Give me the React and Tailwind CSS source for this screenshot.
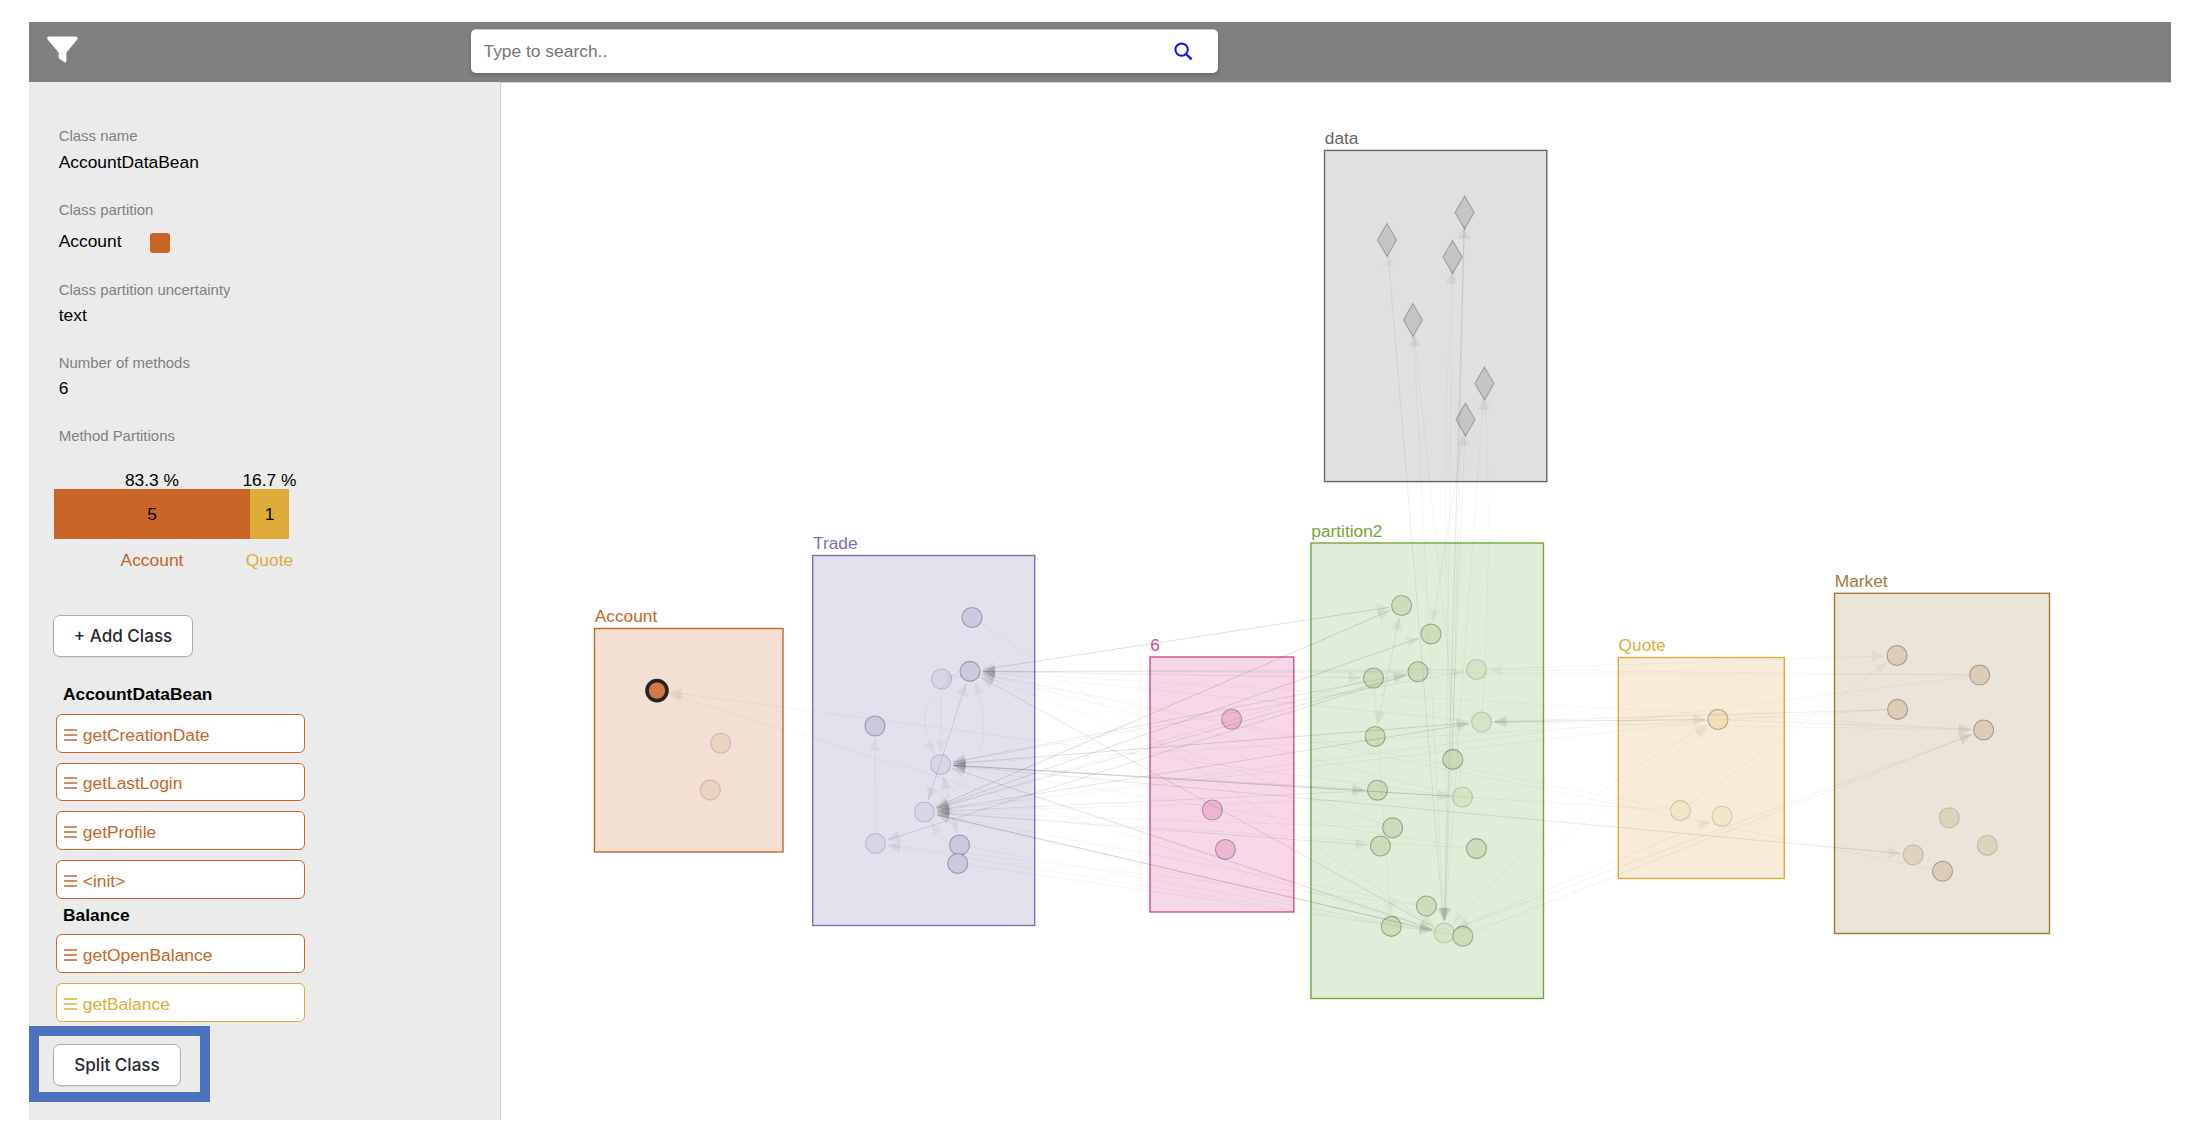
import React from "react";

const ORANGE = "#c86527";
const GOLD = "#dfac3a";

/* ---------- graph data ---------- */

const BOXES = [
  { name: "Account", x: 594.5, y: 628.5, w: 188.5, h: 223.5, c: "#c86527", f: "#f3dfd4" },
  { name: "Trade", x: 812.7, y: 555.5, w: 222, h: 370, c: "#7773b5", f: "#e2e2ee" },
  { name: "6", x: 1150, y: 657, w: 143.7, h: 255, c: "#d64a92", f: "#f6d8e7" },
  { name: "partition2", x: 1311, y: 543, w: 232.5, h: 455.5, c: "#74a63a", f: "#e1edd8" },
  { name: "data", x: 1324.5, y: 150.4, w: 222.3, h: 331.2, c: "#666666", f: "#e0e0e0" },
  { name: "Quote", x: 1618.3, y: 657.5, w: 166, h: 221, c: "#dfac3a", f: "#f7ecd8" },
  { name: "Market", x: 1834.5, y: 593.3, w: 215, h: 340.2, c: "#a27a33", f: "#ebe4d8" },
];

const FILLS = {
  A: ["#eccfba", "#ecd2bf"],
  T: ["#cac8df", "#d6d4e7"],
  S: ["#edb3d0", "#edb3d0"],
  P: ["#ccdcb6", "#d5e2c4"],
  Q: ["#f2dfb8", "#f4e6c5"],
  M: ["#dccbb3", "#dfd2b9"],
};

/* id: [x, y, faint] */
const NODES = {
  A1: [657, 690.5, 0], A2: [720.7, 743.3, 1], A3: [710.3, 790, 1],
  T1: [972, 617.5, 0], T2: [970, 671.4, 0], T3: [941.5, 679, 1], T4: [875, 726, 0],
  T5: [940.6, 764.5, 1], T6: [924.4, 812, 1], T7: [875.5, 843.5, 1], T8: [959.5, 845, 0], T9: [957.8, 863.5, 0],
  S1: [1231.6, 719.3, 0], S2: [1212.3, 810, 0], S3: [1225.4, 849.5, 0],
  P1: [1401.6, 605.5, 0], P2: [1431, 634, 0], P3: [1373.5, 678, 0], P4: [1418, 671.7, 0],
  P5: [1476.5, 669.5, 1], P6: [1481.5, 722, 1], P7: [1375.2, 736.5, 0], P8: [1452.8, 759.4, 0],
  P9: [1377.5, 790.3, 0], P10: [1462.5, 797, 1], P11: [1392.6, 827.7, 0], P12: [1380.4, 846, 0],
  P13: [1476.5, 848.6, 0], P14: [1426.4, 906, 0], P15: [1391.3, 926.4, 0], P16: [1444.3, 933, 1],
  P17: [1462.8, 936.3, 0],
  Q1: [1718, 719.5, 0], Q2: [1680.4, 810.6, 1], Q3: [1722, 816.2, 1],
  M1: [1897, 655.5, 0], M2: [1979.7, 675, 0], M3: [1897.6, 709.4, 0], M4: [1983.6, 730, 0],
  M5: [1949.3, 817.8, 1], M6: [1987.3, 845.4, 1], M7: [1913.2, 854.7, 1], M8: [1942.5, 871.2, 0],
};

const DIAMONDS = {
  D1: [1387, 240], D2: [1464.6, 212.5], D3: [1452.6, 257],
  D4: [1412.9, 320], D5: [1484.5, 383.5], D6: [1465.5, 419.5],
};

/* [from, to, opacity, arrow at the start too, bend] */
const EDGES = [
  ["P10", "A1", 0.04], ["P16", "A1", 0.04],
  ["P1", "T2", 0.12, 1], ["P4", "T2", 0.06], ["P3", "T2", 0.07, 1], ["P5", "T2", 0.05],
  ["P6", "T2", 0.04], ["P10", "T2", 0.04], ["Q2", "T2", 0.03], ["M8", "T2", 0.035],
  ["P16", "T2", 0.1], ["M4", "T2", 0.03], ["M2", "T2", 0.035], ["P11", "T2", 0.035],
  ["T1", "P16", 0.045], ["T3", "T5", 0.04], ["T3", "T2", 0.03], ["T7", "T4", 0.045],
  ["T2", "T6", 0.11, 1], ["T2", "T5", 0.04, 0, 52], ["T6", "T2", 0.035, 0, 62],
  ["T8", "T5", 0.06, 1], ["T9", "T6", 0.04],
  ["P4", "T5", 0.09, 1], ["P6", "T5", 0.12, 1], ["P5", "T5", 0.06, 1], ["P10", "T5", 0.14, 1], ["P9", "T5", 0.08, 1],
  ["M7", "T5", 0.09, 1], ["P16", "T5", 0.12, 1], ["Q2", "T5", 0.04], ["P13", "T5", 0.03], ["M3", "T5", 0.04],
  ["P1", "T6", 0.13, 1], ["P2", "T6", 0.12, 1], ["P4", "T6", 0.09, 1], ["P3", "T6", 0.05],
  ["P6", "T6", 0.1, 1], ["P10", "T6", 0.04], ["P9", "T6", 0.07, 1], ["P11", "T6", 0.04],
  ["P12", "T6", 0.08, 1], ["P13", "T6", 0.04], ["P16", "T6", 0.18, 1], ["P14", "T6", 0.04],
  ["Q1", "T6", 0.04], ["M2", "T6", 0.035], ["P15", "T6", 0.03],
  ["P4", "T7", 0.1], ["P14", "T7", 0.035], ["P17", "T7", 0.035],
  ["T9", "P16", 0.045], ["T8", "P16", 0.035],
  ["P7", "P1", 0.07, 1], ["P3", "P15", 0.035],
  ["P16", "D1", 0.07, 1], ["P16", "D4", 0.04, 1], ["P10", "D4", 0.04], ["P16", "D3", 0.04, 1],
  ["P8", "D3", 0.03, 0, -14], ["P16", "D2", 0.09, 1], ["P8", "D2", 0.05], ["P2", "D6", 0.05, 1],
  ["P16", "D6", 0.05, 1], ["P16", "D5", 0.04, 1], ["P6", "D5", 0.035, 0, 10],
  ["P5", "M1", 0.04], ["M2", "P5", 0.035],
  ["P6", "Q1", 0.12, 1], ["M3", "P6", 0.07], ["Q1", "M4", 0.05], ["P6", "M4", 0.035],
  ["Q2", "M1", 0.04], ["P16", "Q1", 0.035], ["P16", "Q1", 0.04, 1, -30],
  ["P16", "Q3", 0.04, 1], ["P16", "M4", 0.05, 1], ["P17", "M4", 0.05],
];

const pos = (id) => NODES[id] || DIAMONDS[id];

function Arrow({ x, y, ux, uy, o }) {
  const bx = x - ux * 12.5;
  const by = y - uy * 12.5;
  return (
    <polygon
      points={`${x},${y} ${bx - uy * 6},${by + ux * 6} ${bx + uy * 6},${by - ux * 6}`}
      fillOpacity={o}
      stroke="none"
    />
  );
}

function Edge({ e }) {
  const [from, to, o, both, bend = 0] = e;
  const [x1, y1] = pos(from);
  const [x2, y2] = pos(to);
  const d = Math.hypot(x2 - x1, y2 - y1);
  const nx = -(y2 - y1) / d;
  const ny = (x2 - x1) / d;
  const cx = (x1 + x2) / 2 + nx * bend;
  const cy = (y1 + y2) / 2 + ny * bend;
  const dir = (ax, ay, bx, by) => {
    const l = Math.hypot(bx - ax, by - ay);
    return [(bx - ax) / l, (by - ay) / l];
  };
  const [eux, euy] = dir(cx, cy, x2, y2);
  const [sux, suy] = dir(cx, cy, x1, y1);
  const g2 = to[0] === "D" ? 14 : 12.5;
  const ex = x2 - eux * g2;
  const ey = y2 - euy * g2;
  const gs = both ? 12.5 : 10;
  const sx = x1 - sux * gs;
  const sy = y1 - suy * gs;
  const ao = to[0] === "D" ? 0.025 : Math.min(o * 0.8, 0.05);
  return (
    <g>
      <path d={`M${sx} ${sy} Q${cx} ${cy} ${ex} ${ey}`} fill="none" stroke="#000" strokeOpacity={o} />
      <Arrow x={ex} y={ey} ux={eux} uy={euy} o={ao} />
      {both ? <Arrow x={sx} y={sy} ux={sux} uy={suy} o={Math.min(o * 0.6, 0.045)} /> : null}
    </g>
  );
}

function Graph() {
  return (
    <svg width="1670" height="1038" viewBox="501 82 1670 1038" className="block">
      {BOXES.map((b) => (
        <g key={b.name}>
          <rect x={b.x} y={b.y} width={b.w} height={b.h} fill={b.f} stroke={b.c} strokeWidth="1.4" />
          <text
            x={b.x + 0.3}
            y={b.y - 6.2}
            fill={b.c}
            className="text-[17.3px] [font-family:'Liberation_Sans',Arial,sans-serif]"
          >
            {b.name}
          </text>
        </g>
      ))}
      <g opacity="0.9">
        {Object.entries(NODES).map(([id, [x, y, faint]]) =>
          id === "A1" ? null : (
            <circle
              key={id}
              cx={x}
              cy={y}
              r="10"
              fill={FILLS[id[0]][faint ? 1 : 0]}
              stroke="#000"
              strokeOpacity={faint ? 0.17 : 0.32}
              strokeWidth="1.1"
            />
          )
        )}
        {Object.entries(DIAMONDS).map(([id, [x, y]]) => (
          <polygon
            key={id}
            points={`${x},${y - 16.3} ${x + 9.5},${y} ${x},${y + 16.3} ${x - 9.5},${y}`}
            fill="#c3c3c3"
            stroke="#999"
            strokeWidth="1.1"
          />
        ))}
      </g>
      <g>
        {EDGES.map((e, i) => (
          <Edge key={i} e={e} />
        ))}
      </g>
      <circle cx="657" cy="690.6" r="10" fill="#d17944" stroke="#262422" strokeWidth="3.6" />
    </svg>
  );
}

/* ---------- sidebar ---------- */

const Label = ({ children }) => (
  <div className="h-[20px] text-[14.95px] leading-[20px] text-[#808080]">{children}</div>
);

function Method({ name, color }) {
  return (
    <div
      className="flex h-[38.6px] w-[249px] items-center rounded-[6px] border bg-white pl-[6.5px] pt-[3px]"
      style={{ color, borderColor: color }}
    >
      <svg width="13" height="12" viewBox="0 0 13 12" className="mr-[6.3px] shrink-0">
        <path d="M0 1H13M0 6H13M0 11H13" stroke="currentColor" strokeWidth="1.6" />
      </svg>
      <span className="leading-[20px]">{name}</span>
    </div>
  );
}

const Button = ({ children, className }) => (
  <button
    className={
      "flex h-[42px] items-center justify-center rounded-[7px] border border-[#adadad] bg-white text-[17.1px] font-medium text-[#24292f] shadow-[0_1px_1px_rgba(0,0,0,0.06)] [font-family:Inter,sans-serif] " +
      className
    }
  >
    {children}
  </button>
);

function Sidebar() {
  return (
    <aside className="h-[1038px] w-[472px] shrink-0 border-r border-[#cfcfcf] bg-[#ebebeb] pt-[44.4px] text-[17.4px] leading-[20px] text-black">
      <div className="pl-[29.7px]">
        <Label>Class name</Label>
        <div className="mt-[5.2px]">AccountDataBean</div>
        <div className="mt-[28.8px]">
          <Label>Class partition</Label>
        </div>
        <div className="mt-[11px] flex h-[20px]">
          <span className="w-[91px]">Account</span>
          <span className="mt-[1.5px] h-[20px] w-[20px] shrink-0 rounded-[3px] bg-[#c86527]" />
        </div>
        <div className="mt-[28.2px]">
          <Label>Class partition uncertainty</Label>
        </div>
        <div className="mt-[5px]">text</div>
        <div className="mt-[28.3px]">
          <Label>Number of methods</Label>
        </div>
        <div className="mt-[5.4px]">6</div>
        <div className="mt-[28px]">
          <Label>Method Partitions</Label>
        </div>
      </div>

      <div className="ml-[25px] mt-[23.7px] flex w-[235px] text-center">
        <div className="flex w-[196px] flex-col items-center">
          <span className="h-[19px] whitespace-nowrap">83.3 %</span>
          <span className="h-[50px] w-full bg-[#c86527] pt-[15px]">5</span>
          <span className="mt-[11px] text-[#c86527]">Account</span>
        </div>
        <div className="flex w-[39px] flex-col items-center">
          <span className="h-[19px] whitespace-nowrap">16.7 %</span>
          <span className="h-[50px] w-full bg-[#dfac3a] pt-[15px]">1</span>
          <span className="mt-[11px] text-[#dfac3a]">Quote</span>
        </div>
      </div>

      <Button className="ml-[24px] mt-[45px] w-[140px]">+ Add Class</Button>

      <div className="ml-[27px] mt-[27.5px]">
        <div className="pl-[7px] text-[17.35px] font-bold">AccountDataBean</div>
        <div className="mt-[9.5px] flex flex-col gap-[10.1px]">
          <Method name="getCreationDate" color={ORANGE} />
          <Method name="getLastLogin" color={ORANGE} />
          <Method name="getProfile" color={ORANGE} />
          <Method name="<init>" color={ORANGE} />
        </div>
        <div className="mt-[6.3px] pl-[7px] text-[17.35px] font-bold">Balance</div>
        <div className="mt-[9.5px] flex flex-col gap-[10.1px]">
          <Method name="getOpenBalance" color={ORANGE} />
          <Method name="getBalance" color={GOLD} />
        </div>
      </div>

      <div className="-ml-[0.5px] mt-[3.9px] h-[76.5px] w-[181px] border-[10px] border-[#4c72bf] pl-[14.5px] pt-[8px]">
        <Button className="w-[128px]">Split Class</Button>
      </div>
    </aside>
  );
}

/* ---------- page ---------- */

export default function App() {
  return (
    <div className="h-[1142px] w-[2188px] overflow-hidden bg-white pl-[29px] pt-[22px] [font-family:'Liberation_Sans',Arial,sans-serif]">
      <header className="flex h-[60px] w-[2142px] items-start bg-[#808080]">
        <svg width="31" height="27" viewBox="0 0 31 27" className="ml-[18px] mt-[14.3px] shrink-0">
          <path
            d="M2.2 0.5H28.6C30.6 0.5 31.2 2.4 30 3.8L19.4 16.4V25C19.4 26.3 18.3 26.8 17.2 26.1L12.6 22.8C11.9 22.3 11.6 21.7 11.6 21V16.4L0.8 3.8C-0.4 2.4 0.2 0.5 2.2 0.5Z"
            fill="#fff"
          />
        </svg>
        <div className="ml-[393px] mt-[7px] flex h-[44px] w-[746.5px] items-center rounded-[5px] border-t border-[#c8c8c8] bg-white pl-[12.5px] pr-[25px] shadow-[0_2px_4px_rgba(0,0,0,0.2)]">
          <span className="flex-1 text-[17.4px] text-[#757575]">Type to search..</span>
          <svg width="19" height="19" viewBox="0 0 19 19" fill="none" stroke="#0a14f0" strokeWidth="2">
            <circle cx="7.6" cy="7.6" r="6.2" />
            <path d="M12 12L17.6 17.4" strokeWidth="2.3" />
          </svg>
        </div>
      </header>
      <div className="flex">
        <Sidebar />
        <main className="h-[1038px] w-[1670px] border-t border-[#cfcfcf]">
          <div className="-mt-px">
            <Graph />
          </div>
        </main>
      </div>
    </div>
  );
}
